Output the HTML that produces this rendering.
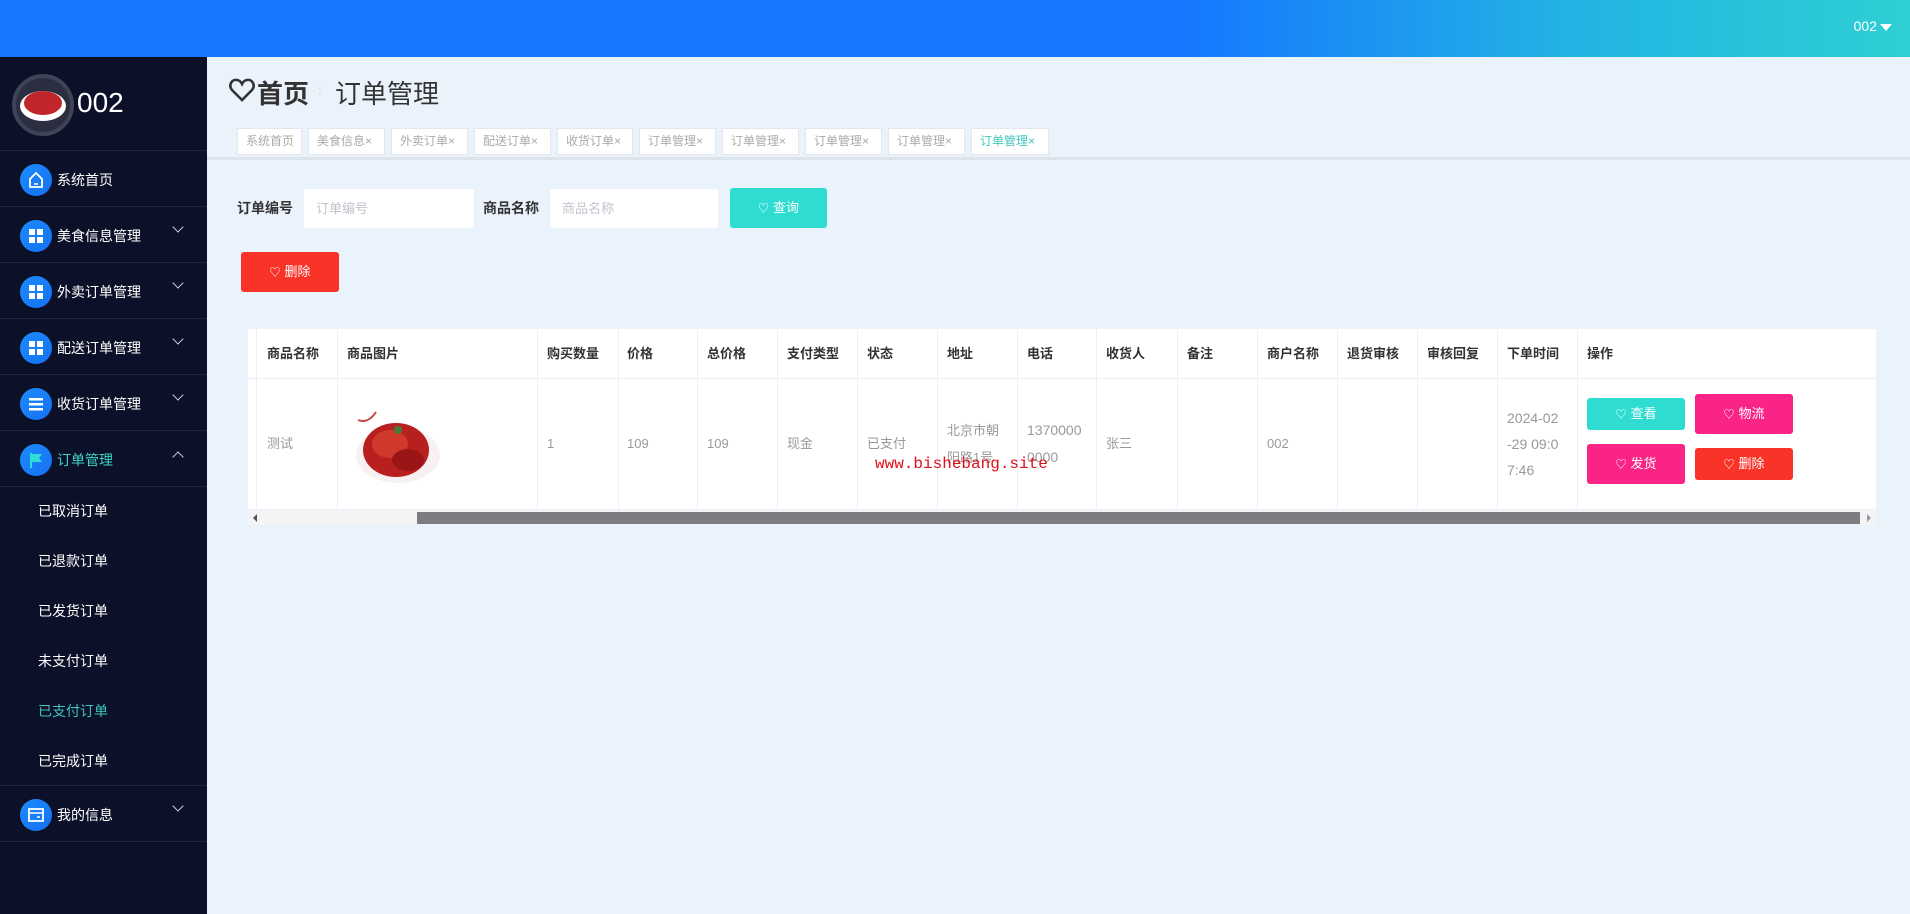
<!DOCTYPE html>
<html><head><meta charset="utf-8">
<style>
*{margin:0;padding:0;box-sizing:border-box}
body{width:1910px;height:914px;overflow:hidden;background:#eaf2fb;font-family:"Liberation Sans","Noto Sans CJK SC",sans-serif;position:relative}
.a{position:absolute}
.top{left:0;top:0;width:1910px;height:57px;background:linear-gradient(90deg,#1677ff 0%,#1677ff 62%,#22b3e4 82%,#2ecfd3 100%)}
.side{left:0;top:57px;width:207px;height:857px;background:#0c1129}
.mi{position:absolute;left:0;width:207px;height:56px;border-bottom:1px solid #1d2440;color:#fff;font-size:14px}
.mi .ic{position:absolute;left:20px;top:13px;width:32px;height:32px;border-radius:50%;background:linear-gradient(135deg,#1b8cff,#1670f0)}
.mi .t{position:absolute;left:57px;top:19px}
.mi .ch{position:absolute;left:174px;top:16px;width:8px;height:8px;border-right:1.5px solid #ccd;border-bottom:1.5px solid #ccd;transform:rotate(45deg)}
.sub{position:absolute;left:38px;color:#fff;font-size:14px}
.tab{position:absolute;top:128px;height:27px;background:#fff;border:1px solid #e3e6ec;color:#aaa;font-size:12px;line-height:25px;padding-left:8px}
.inp{background:#fff;border-radius:3px;color:#c0c4cc;font-size:13px;padding-left:12px;line-height:39px}
.btn{color:#fff;font-size:13px;text-align:center;border-radius:3px}
.btn b{font-weight:normal;font-size:11px;margin-right:4px}
.th{position:absolute;top:329px;height:49px;line-height:49px;font-size:13px;font-weight:bold;color:#333;padding-left:9px}
.td{position:absolute;top:378px;height:131px;font-size:13px;color:#999;padding-left:9px;display:flex;align-items:center;line-height:27px}
.vl{position:absolute;top:329px;width:1px;height:180px;background:#eef0f3}
</style></head><body>
<div class="a top"></div>
<div class="a" style="right:33px;top:18px;color:#fff;font-size:14px">002</div>
<div class="a" style="right:18px;top:24px;width:0;height:0;border-left:6px solid transparent;border-right:6px solid transparent;border-top:7px solid #fff"></div>

<div class="a side">
 <div class="a" style="left:12px;top:17px;width:62px;height:62px;border-radius:50%;border:4px solid #3f4356;background:#2a2e40"></div>
 <div class="a" style="left:20px;top:34px;width:46px;height:30px;border-radius:50%;background:#fff"></div>
 <div class="a" style="left:24px;top:34px;width:38px;height:24px;border-radius:50%;background:#c0262a"></div>
 <div class="a" style="left:77px;top:30px;color:#fff;font-size:28px">002</div>
 <div class="a" style="left:0;top:93px;width:207px;height:1px;background:#1d2440"></div>
</div>
<div class="mi" style="top:151px"><div class="ic"><svg width="32" height="32" viewBox="0 0 32 32"><path d="M10 15 L16 9 L22 15 V23 H10 Z" fill="none" stroke="#fff" stroke-width="1.8"/><path d="M14 20h4" stroke="#fff" stroke-width="1.6"/></svg></div><span class="t">系统首页</span></div>
<div class="mi" style="top:207px"><div class="ic"><svg width="32" height="32"><rect x="9" y="9" width="6" height="6" fill="#fff"/><rect x="17" y="9" width="6" height="6" fill="#fff"/><rect x="9" y="17" width="6" height="6" fill="#fff"/><rect x="17" y="17" width="6" height="6" fill="#fff"/></svg></div><span class="t">美食信息管理</span><i class="ch"></i></div>
<div class="mi" style="top:263px"><div class="ic"><svg width="32" height="32"><rect x="9" y="9" width="6" height="6" fill="#fff"/><rect x="17" y="9" width="6" height="6" fill="#fff"/><rect x="9" y="17" width="6" height="6" fill="#fff"/><rect x="17" y="17" width="6" height="6" fill="#fff"/></svg></div><span class="t">外卖订单管理</span><i class="ch"></i></div>
<div class="mi" style="top:319px"><div class="ic"><svg width="32" height="32"><rect x="9" y="9" width="6" height="6" fill="#fff"/><rect x="17" y="9" width="6" height="6" fill="#fff"/><rect x="9" y="17" width="6" height="6" fill="#fff"/><rect x="17" y="17" width="6" height="6" fill="#fff"/></svg></div><span class="t">配送订单管理</span><i class="ch"></i></div>
<div class="mi" style="top:375px"><div class="ic"><svg width="32" height="32"><rect x="9" y="10" width="14" height="2.5" fill="#fff"/><rect x="9" y="15" width="14" height="2.5" fill="#fff"/><rect x="9" y="20" width="14" height="2.5" fill="#fff"/></svg></div><span class="t">收货订单管理</span><i class="ch"></i></div>
<div class="mi" style="top:431px"><div class="ic"><svg width="32" height="32"><path d="M11 9v15" stroke="#2ee0d0" stroke-width="2"/><path d="M11 10h11l-3 4 3 4H11z" fill="#2ee0d0"/></svg></div><span class="t" style="color:#3fd5c8">订单管理</span><i class="ch" style="top:22px;transform:rotate(225deg)"></i></div>
<div class="sub" style="top:501px">已取消订单</div>
<div class="sub" style="top:551px">已退款订单</div>
<div class="sub" style="top:601px">已发货订单</div>
<div class="sub" style="top:651px">未支付订单</div>
<div class="sub" style="top:701px;color:#3fc5bc">已支付订单</div>
<div class="sub" style="top:751px">已完成订单</div>
<div class="a" style="left:0;top:785px;width:207px;height:1px;background:#1d2440"></div>
<div class="mi" style="top:786px"><div class="ic"><svg width="32" height="32"><rect x="9" y="10" width="14" height="12" fill="none" stroke="#fff" stroke-width="1.8"/><path d="M9 14h14M17 18h3" stroke="#fff" stroke-width="1.6"/></svg></div><span class="t">我的信息</span><i class="ch"></i></div>

<svg class="a" style="left:229px;top:78px" width="26" height="24" viewBox="0 0 26 24"><path d="M13 22 L3 12 C-1 7 3 1 8 2 C11 2.5 12 4 13 6 C14 4 15 2.5 18 2 C23 1 27 7 23 12 Z" fill="none" stroke="#333" stroke-width="2.6"/></svg>
<div class="a" style="left:257px;top:74px;font-size:26px;font-weight:bold;color:#333">首页</div>
<div class="a" style="left:318px;top:82px;font-size:14px;color:#ccc">:</div>
<div class="a" style="left:335px;top:74px;font-size:26px;color:#333">订单管理</div>

<div class="tab" style="left:237px;width:65px">系统首页</div>
<div class="tab" style="left:308px;width:77px">美食信息×</div>
<div class="tab" style="left:391px;width:77px">外卖订单×</div>
<div class="tab" style="left:474px;width:77px">配送订单×</div>
<div class="tab" style="left:557px;width:76px">收货订单×</div>
<div class="tab" style="left:639px;width:77px">订单管理×</div>
<div class="tab" style="left:722px;width:77px">订单管理×</div>
<div class="tab" style="left:805px;width:77px">订单管理×</div>
<div class="tab" style="left:888px;width:77px">订单管理×</div>
<div class="tab" style="left:971px;width:78px;color:#3fc5bc">订单管理×</div>
<div class="a" style="left:207px;top:157px;width:1703px;height:3px;background:#dde3ea"></div>

<div class="a" style="left:237px;top:198px;font-size:14px;font-weight:bold;color:#333">订单编号</div>
<div class="a inp" style="left:304px;top:189px;width:170px;height:39px">订单编号</div>
<div class="a" style="left:483px;top:198px;font-size:14px;font-weight:bold;color:#333">商品名称</div>
<div class="a inp" style="left:550px;top:189px;width:168px;height:39px">商品名称</div>
<div class="a btn" style="left:730px;top:188px;width:97px;height:40px;line-height:40px;background:#2fdcd2"><b>♡</b>查询</div>
<div class="a btn" style="left:241px;top:252px;width:98px;height:40px;line-height:40px;background:#f93328"><b>♡</b>删除</div>

<div class="a" style="left:248px;top:329px;width:1628px;height:180px;background:#fff"></div>
<div class="a" style="left:248px;top:378px;width:1628px;height:1px;background:#ebeef5"></div>
<div class="vl" style="left:256px"></div><div class="vl" style="left:337px"></div><div class="vl" style="left:537px"></div><div class="vl" style="left:618px"></div><div class="vl" style="left:697px"></div><div class="vl" style="left:777px"></div><div class="vl" style="left:857px"></div><div class="vl" style="left:937px"></div><div class="vl" style="left:1017px"></div><div class="vl" style="left:1096px"></div><div class="vl" style="left:1177px"></div><div class="vl" style="left:1257px"></div><div class="vl" style="left:1337px"></div><div class="vl" style="left:1417px"></div><div class="vl" style="left:1497px"></div><div class="vl" style="left:1577px"></div>
<div class="th" style="left:258px">商品名称</div><div class="th" style="left:338px">商品图片</div><div class="th" style="left:538px">购买数量</div><div class="th" style="left:618px">价格</div><div class="th" style="left:698px">总价格</div><div class="th" style="left:778px">支付类型</div><div class="th" style="left:858px">状态</div><div class="th" style="left:938px">地址</div><div class="th" style="left:1018px">电话</div><div class="th" style="left:1097px">收货人</div><div class="th" style="left:1178px">备注</div><div class="th" style="left:1258px">商户名称</div><div class="th" style="left:1338px">退货审核</div><div class="th" style="left:1418px">审核回复</div><div class="th" style="left:1498px">下单时间</div><div class="th" style="left:1578px">操作</div>
<div class="td" style="left:258px">测试</div>
<svg class="a" style="left:350px;top:400px" width="100" height="85" viewBox="0 0 100 85"><path d="M8 20 Q18 24 26 12" stroke="#c44" stroke-width="2" fill="none"/><ellipse cx="48" cy="55" rx="42" ry="28" fill="#f7f1f1"/><ellipse cx="46" cy="50" rx="33" ry="27" fill="#b8201f"/><ellipse cx="40" cy="44" rx="18" ry="14" fill="#d0392c"/><ellipse cx="58" cy="60" rx="16" ry="11" fill="#9a1616"/><circle cx="48" cy="30" r="4" fill="#4a7a3a"/></svg>
<div class="td" style="left:538px">1</div><div class="td" style="left:618px">109</div><div class="td" style="left:698px">109</div><div class="td" style="left:778px">现金</div><div class="td" style="left:858px">已支付</div>
<div class="td" style="left:938px;width:79px">北京市朝<br>阳路1号</div>
<div class="td" style="left:1018px;width:79px;font-size:14px">1370000<br>0000</div>
<div class="td" style="left:1097px">张三</div><div class="td" style="left:1258px">002</div>
<div class="td" style="left:1498px;width:79px;font-size:14px;line-height:26px">2024-02<br>-29 09:0<br>7:46</div>
<div class="a btn" style="left:1587px;top:398px;width:98px;height:32px;line-height:32px;background:#2fdcd2"><b>♡</b>查看</div>
<div class="a btn" style="left:1695px;top:394px;width:98px;height:40px;line-height:40px;background:#fa2486"><b>♡</b>物流</div>
<div class="a btn" style="left:1587px;top:444px;width:98px;height:40px;line-height:40px;background:#fa2486"><b>♡</b>发货</div>
<div class="a btn" style="left:1695px;top:448px;width:98px;height:32px;line-height:32px;background:#f93328"><b>♡</b>删除</div>
<div class="a" style="left:875px;top:455px;font-family:'Liberation Mono',monospace;font-size:16px;color:#e0101a">www.bishebang.site</div>

<div class="a" style="left:248px;top:510px;width:1628px;height:15px;background:#f3f4f6"></div>
<div class="a" style="left:417px;top:512px;width:1443px;height:12px;background:#7b7d80"></div>
<div class="a" style="left:253px;top:514px;width:0;height:0;border-top:4px solid transparent;border-bottom:4px solid transparent;border-right:4px solid #555"></div>
<div class="a" style="left:1867px;top:514px;width:0;height:0;border-top:4px solid transparent;border-bottom:4px solid transparent;border-left:4px solid #999"></div>
</body></html>
